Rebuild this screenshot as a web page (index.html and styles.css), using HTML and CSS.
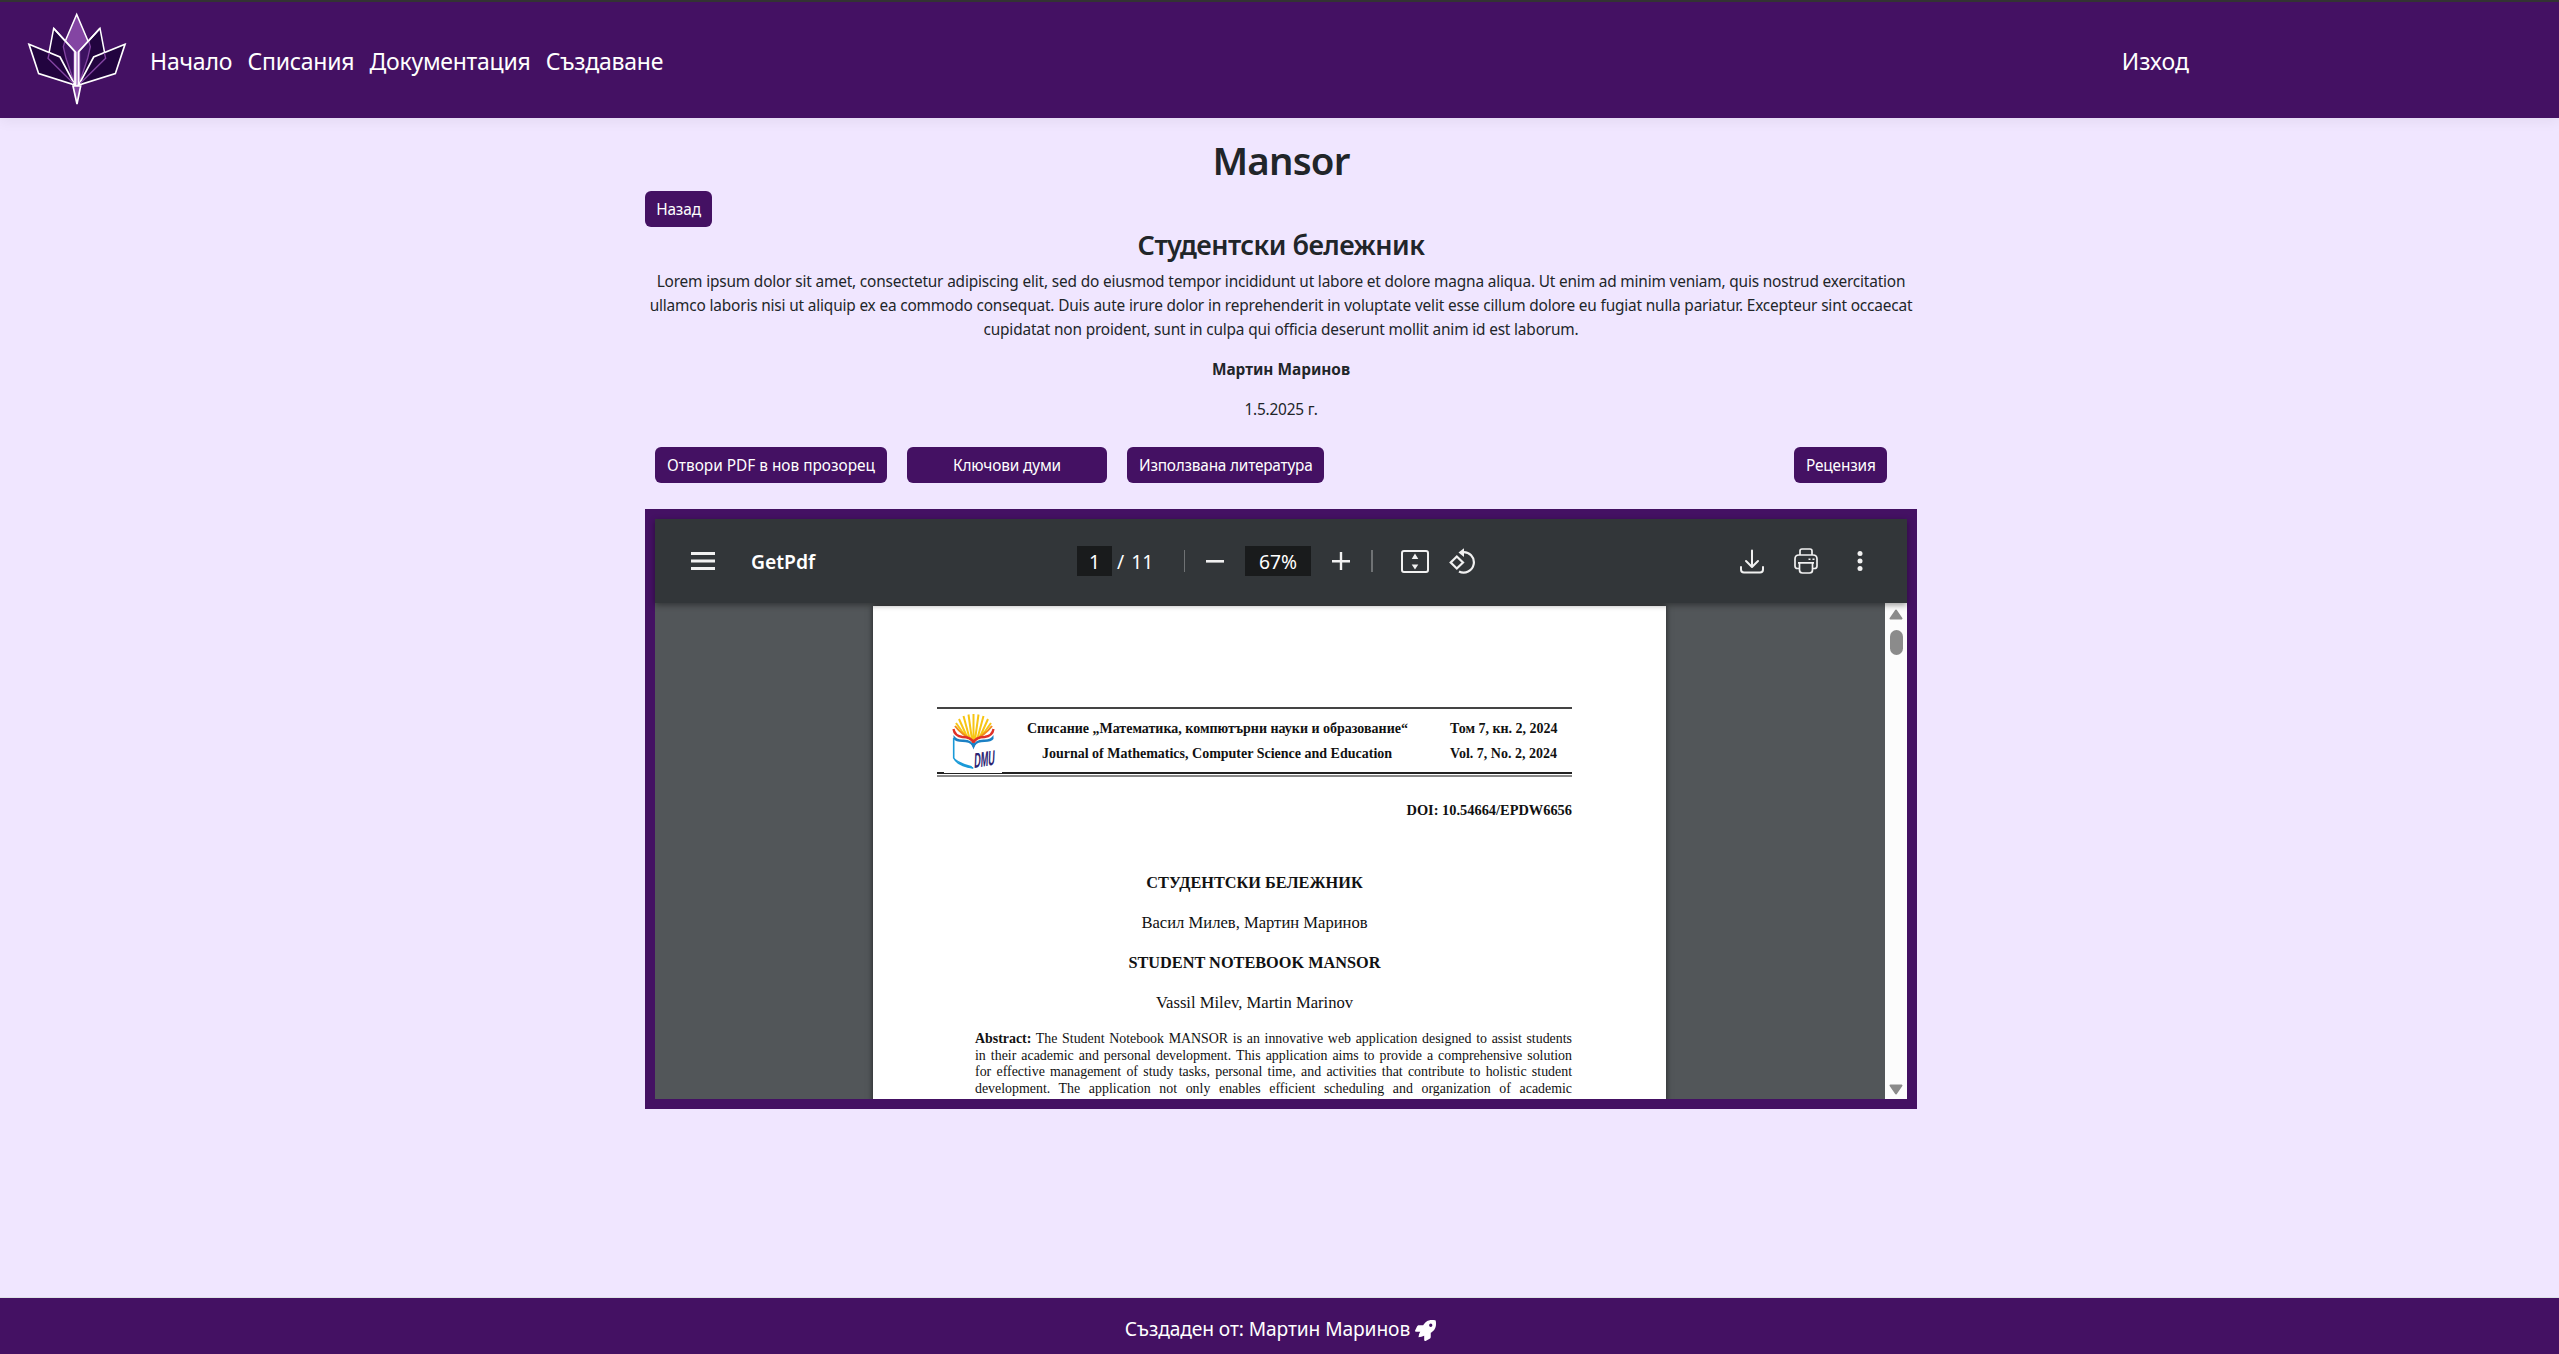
FILE: index.html
```html
<!DOCTYPE html>
<html lang="bg">
<head>
<meta charset="utf-8">
<title>Mansor</title>
<link rel="stylesheet" href="styles.css">
</head>
<body>
<header class="navbar">
  <svg class="brand" viewBox="0 0 345 330" width="115" height="110">
    <g stroke-linejoin="miter">
      <path d="M170 28 205 110 192 145 175 240H165L148 145 135 110Z" fill="#8445a3" stroke="#fff" stroke-width="4.500"/>
      <path d="M101 70 165 140V240L84 160Z" fill="#22043f" stroke="#fff" stroke-width="4.500"/>
      <path d="M240 70 176 140V240L257 160Z" fill="#22043f" stroke="#fff" stroke-width="4.500"/>
      <path d="M135 108 130 125 138 160 162 232 162 138 137 110ZM206 108 211 125 203 160 179 232 179 138 204 110Z" fill="#3d1261" stroke="#8445a3" stroke-width="4"/>
      <path d="M101 70 165 140V240M240 70 176 140V240" fill="none" stroke="#fff" stroke-width="5"/>
      <path d="M27 118 120 156 165 240 56 206Z" fill="#22043f" stroke="#fff" stroke-width="5"/>
      <path d="M315 118 221 156 176 240 286 206Z" fill="#22043f" stroke="#fff" stroke-width="5"/>
      <path d="M88 144 84 160 160 235M253 144 257 160 181 235" fill="none" stroke="#8445a3" stroke-width="4"/>
      <path d="M170.500 140V240" stroke="#c9a6da" stroke-width="5"/>
      <path d="M159 243H182L171 297Z" fill="#8445a3" stroke="#fff" stroke-width="5"/>
    </g>
  </svg>
  <nav class="links">
    <a class="home">Начало</a><a class="tight">Списания</a><a class="tight">Документация</a><a class="tight">Създаване</a>
  </nav>
  <a class="logout">Изход</a>
</header>
<main class="page">
  <h1>Mansor</h1>
  <button class="btn back">Назад</button>
  <h2>Студентски бележник</h2>
  <p class="lead">Lorem ipsum dolor sit amet, consectetur adipiscing elit, sed do eiusmod tempor incididunt ut labore et dolore magna aliqua. Ut enim ad minim veniam, quis nostrud exercitation<br>ullamco laboris nisi ut aliquip ex ea commodo consequat. Duis aute irure dolor in reprehenderit in voluptate velit esse cillum dolore eu fugiat nulla pariatur. Excepteur sint occaecat<br>cupidatat non proident, sunt in culpa qui officia deserunt mollit anim id est laborum.</p>
  <p class="author">Мартин Маринов</p>
  <p class="date">1.5.2025 г.</p>
  <div class="actions">
    <button class="btn open-pdf">Отвори PDF в нов прозорец</button>
    <button class="btn keywords">Ключови думи</button>
    <button class="btn sources">Използвана литература</button>
    <button class="btn review">Рецензия</button>
  </div>
  <section class="viewer">
    <div class="toolbar">
      <svg class="menu" width="24" height="18" fill="#f1f1f1"><path d="M0 0h24v3H0zM0 7.500h24v3H0zM0 15h24v3H0z"/></svg>
      <span class="doc-title">GetPdf</span>
      <span class="field num">1</span>
      <span class="pages">/ <span class="total">11</span></span>
      <i class="sep"></i>
      <svg class="minus" width="18" height="18" fill="#f1f1f1"><path d="M0 8h18v2.600H0z"/></svg>
      <span class="field zoom">67%</span>
      <svg class="plus" width="18" height="18" fill="#f1f1f1"><path d="M0 8h18v2.400H0zM7.800 0h2.400v18H7.800z"/></svg>
      <i class="sep wide"></i>
      <svg class="fit" width="28" height="23" fill="none" stroke="#f1f1f1" stroke-width="2"><rect x="1" y="1" width="26" height="21" rx="2"/><path d="M14 3.500 17.300 9H10.700zM14 19.500 17.300 14.500H10.700z" fill="#f1f1f1" stroke="none"/></svg>
      <svg class="rotate" width="26" height="26" fill="none" stroke="#f1f1f1" stroke-width="2.200"><path d="M7.800 8.500 14 14.500 7.800 20.500 1.700 14.500zM13.500 4.200A10.200 10.200 0 1 1 10 23.400"/><path d="M9.500 4.600 15 .2V9z" fill="#f1f1f1" stroke="none"/></svg>
      <svg class="download" width="24" height="25" fill="none" stroke="#f1f1f1" stroke-width="2" stroke-linecap="round" stroke-linejoin="round"><path d="M12 1.500v16M6 12l6 6 6-6M1 18v2.500q0 3 3 3h16q3 0 3-3V18"/></svg>
      <svg class="print" width="24" height="26" fill="none" stroke="#f1f1f1" stroke-width="1.700" stroke-linejoin="round"><path d="M6 7V3q0-2 2-2h8q2 0 2 2v4M5 20.500H3.500Q1 20.500 1 18v-7q0-4 4-4h14q4 0 4 4v7q0 2.500-2.500 2.500H19M4 14.800h16M5.500 14.800V22q0 3 3 3h7q3 0 3-3v-7.200"/><path d="M14.500 10.500h2v1.500h-2zM18.500 10.500h2v1.500h-2z" fill="#f1f1f1" stroke="none"/></svg>
      <svg class="more" width="6" height="20" fill="#f1f1f1"><circle cx="3" cy="2.500" r="2.500"/><circle cx="3" cy="10" r="2.500"/><circle cx="3" cy="17.500" r="2.500"/></svg>
    </div>
    <div class="canvas">
      <article class="sheet">
        <div class="masthead">
          <svg class="journal" width="58" height="65" viewBox="944 709 58 65">
            <path d="M944 771h58v2h-58z" fill="#fff"/>
            <g stroke="#f7c514" stroke-width="2" fill="none">
              <path d="M973.500 741V714M972 740l-3.500-25.500M975 740l3.500-25.500M970 740l-6.500-24M977 740l6.500-24M968 739l-9-20M979 739l9-20M966 737l-10-14M981 737l10-14"/>
            </g>
            <path d="M955 726q7 9 18.500 14.500Q985 735 992 726" fill="none" stroke="#f08a1d" stroke-width="2"/>
            <path d="M953.500 729q1 7 9 8 9 0 11 6 2-6 11-6 8-1 9-8" fill="none" stroke="#e03127" stroke-width="2.300"/>
            <path d="M953.500 735q3 5 10 4.500 9 0 10 6.500 1-6.500 10-6.500 7 .5 10-4.500v4q-2 3-9 3t-9 3l-2 3-2-3q-2-3-9-3t-9-3z" fill="#1b80c4"/>
            <path d="M953.700 738v20q4 8 19.500 10" fill="none" stroke="#1a9ad8" stroke-width="1.600"/>
            <path d="M954 758q5 8 19.500 10.500l-2-2.500q-12-3-17.500-8z" fill="#1a9ad8"/>
            <path d="M971 743h5l-2.500 6.500z" fill="#1b80c4"/>
            <text class="mark" transform="translate(974 768) scale(.43 1) skewY(-4) skewX(-6)">DMU</text>
          </svg>
          <div class="journal-name">Списание „Математика, компютърни науки и образование“<br>Journal of Mathematics, Computer Science and Education</div>
          <div class="volume">Том 7, кн. 2, 2024<br>Vol. 7, No. 2, 2024</div>
        </div>
        <div class="rule"></div>
        <div class="doi">DOI: 10.54664/EPDW6656</div>
        <h3>СТУДЕНТСКИ БЕЛЕЖНИК</h3>
        <h4>Васил Милев, Мартин Маринов</h4>
        <h3>STUDENT NOTEBOOK MANSOR</h3>
        <h4>Vassil Milev, Martin Marinov</h4>
        <p class="abstract">
          <span><b>Abstract:</b> The Student Notebook MANSOR is an innovative web application designed to assist students</span>
          <span>in their academic and personal development. This application aims to provide a comprehensive solution</span>
          <span>for effective management of study tasks, personal time, and activities that contribute to holistic student</span>
          <span>development. The application not only enables efficient scheduling and organization of academic</span>
        </p>
      </article>
      <div class="scrollbar">
        <svg width="14" height="11"><path d="M7 1.500 12.500 9.500H1.500z" fill="#8b8b8b" stroke="#8b8b8b" stroke-width="2" stroke-linejoin="round"/></svg>
        <i class="thumb"></i>
        <svg class="down" width="14" height="11"><path d="M7 9.500 12.500 1.500H1.500z" fill="#8b8b8b" stroke="#8b8b8b" stroke-width="2" stroke-linejoin="round"/></svg>
      </div>
    </div>
  </section>
</main>
<footer class="footer">
  <span>Създаден от: Мартин Маринов</span>
  <svg class="rocket" width="21" height="21" viewBox="0 0 512 512" fill="#fff"><path d="M505.120 19.094c-1.189-5.531-6.658-11-12.207-12.188C460.716 0 435.507 0 410.407 0 307.175 0 245.269 55.203 199.052 128H94.838c-16.348.016-35.557 11.875-42.887 26.484L2.516 253.297A28.400 28.400 0 0 0 0 264a24 24 0 0 0 24.006 24H127.816L100 340 85 420 156.246 406.625 223.998 384.156V488a24 24 0 0 0 24.006 24 28.560 28.560 0 0 0 10.707-2.516l98.728-49.391c14.629-7.297 26.508-26.500 26.508-42.859V312.797c72.598-46.313 128.035-108.406 128.035-211.094C512.075 76.500 512.075 51.297 505.120 19.094ZM384.040 168A40 40 0 1 1 424.050 128 40 40 0 0 1 384.040 168Z"/></svg>
</footer>
</body>
</html>
```
FILE: styles.css
```css
* { box-sizing: border-box; }
body {
  margin: 0;
  height: 1354px;
  display: flex;
  flex-direction: column;
  background: #f0e6ff;
  color: #212529;
  font: 15.4px/24px "Noto Sans", "Open Sans", sans-serif;
  overflow: hidden;
}
h1, h2, h3, h4, p { margin: 0; }
.navbar {
  height: 118px;
  flex: none;
  display: flex;
  align-items: center;
  border-top: 2px solid #333333;
  background: #441163;
  color: #fff;
  font-size: 23px;
  box-shadow: 0 4px 12px rgba(0, 0, 0, .05);
  padding: 0 370px 0 20px;
}
.brand { flex: none; }
.links { display: flex; margin-left: 15px; padding-top: 2px; gap: 15.3px; }
.home { letter-spacing: -.2px; }
.tight { letter-spacing: -.25px; }
.logout { margin-left: auto; padding-top: 2px; letter-spacing: .1px; }
.page { width: 1272px; margin: 18px 0 0 645px; flex: 1; text-align: center; }
h1 { font-size: 38.4px; line-height: 48px; font-weight: 600; height: 55px; letter-spacing: -.8px; }
h2 { font-size: 27px; line-height: 35px; font-weight: 600; height: 43px; letter-spacing: -.55px; white-space: nowrap; }
.btn {
  display: block;
  height: 36px;
  padding: 7px 12px 5px;
  border: 0;
  border-radius: 6px;
  background: #441163;
  color: #fff;
  font: inherit;
  letter-spacing: -.15px;
  white-space: nowrap;
}
.back { width: 67px; padding-left: 11px; padding-right: 11px; }
.lead { white-space: nowrap; margin-bottom: 16px; letter-spacing: -.169px; }
.author { font-weight: 700; margin-bottom: 16px; }
.date { margin-bottom: 25px; letter-spacing: -.2px; }
.actions { display: flex; gap: 20px; padding: 0 30px 0 10px; margin-bottom: 26px; }
.open-pdf { width: 232px; letter-spacing: 0; }
.keywords { width: 200px; }
.sources { width: 197px; letter-spacing: -.22px; }
.review { width: 93px; margin-left: auto; }
.viewer { height: 600px; border: 10px solid #441163; display: flex; flex-direction: column; }
.toolbar {
  height: 84px;
  flex: none;
  display: flex;
  align-items: center;
  padding: 0 44px 0 36px;
  background: #323639;
  color: #fff;
  font-size: 19.3px;
  box-shadow: 0 2px 6px rgba(0, 0, 0, .4);
  z-index: 1;
}
.toolbar > * { flex: none; }
.doc-title { margin-left: 36px; width: 326px; padding-top: 2px; text-align: left; font-weight: 600; }
.field { background: #191b1c; height: 30px; line-height: 31px; text-align: center; }
.num { width: 35px; }
.pages { width: 72px; padding: 2px 0 0 5px; text-align: left; }
.total { margin-left: 2px; }
.sep { width: 1px; height: 22px; background: #6f7274; }
.sep.wide { width: 2px; margin-left: 21px; }
.minus, .zoom, .plus { margin-left: 21px; }
.zoom { width: 66px; }
.fit { margin-left: 28px; }
.rotate { margin-left: 20px; }
.download { margin-left: auto; }
.print { margin-left: 30px; }
.more { margin-left: 39px; }
.canvas { flex: 1; min-height: 0; display: flex; background: #525659; overflow: hidden; }
.sheet {
  width: 793px;
  height: 600px;
  margin: 3px 219px 0 218px;
  padding: 101px 94px 0 64px;
  background: #fff;
  color: #111;
  box-shadow: 0 0 6px rgba(0, 0, 0, .6);
  font-family: "Liberation Serif", serif;
  white-space: nowrap;
}
.masthead { display: flex; height: 65px; border-top: 2px solid #444; font-weight: 700; font-size: 14px; line-height: 25px; }
.journal { margin-left: 7px; flex: none; overflow: visible; position: relative; z-index: 1; }
.mark { font: bold 21px "Liberation Sans", sans-serif; fill: #2c2472; }
.journal-name { width: 380px; margin-left: 25px; padding-top: 7px; }
.volume { margin-left: 43px; padding-top: 7px; width: 107px; }
.rule { height: 5px; border-top: 2px solid #222; border-bottom: 2px solid #888; }
.doi { text-align: right; font-weight: 700; font-size: 14.4px; line-height: 24px; margin-top: 21px; margin-bottom: 41px; }
.sheet h3, .sheet h4 { font-size: 16.6px; line-height: 40px; font-weight: 400; }
.sheet h3 { font-size: 16.3px; font-weight: 700; }
.abstract { padding-left: 38px; font-size: 13.9px; line-height: 16.7px; margin-top: 8px; }
.abstract span { display: block; text-align: justify; text-align-last: justify; white-space: normal; }
.scrollbar { width: 22px; background: #fcfcfc; display: flex; flex-direction: column; align-items: center; padding: 6px 0 4px; }
.thumb { width: 13px; height: 25px; border-radius: 7px; background: #8b8b8b; margin-top: 10px; }
.down { margin-top: auto; }
.footer {
  height: 57px;
  flex: none;
  display: flex;
  justify-content: center;
  align-items: center;
  gap: 5px;
  padding: 5px 0 0 2px;
  border-top: 1px solid #dee2e6;
  background: #441163;
  color: #fff;
  font-size: 19.2px;
  letter-spacing: -.1px;
}
.rocket { margin-top: 3px; }
```
